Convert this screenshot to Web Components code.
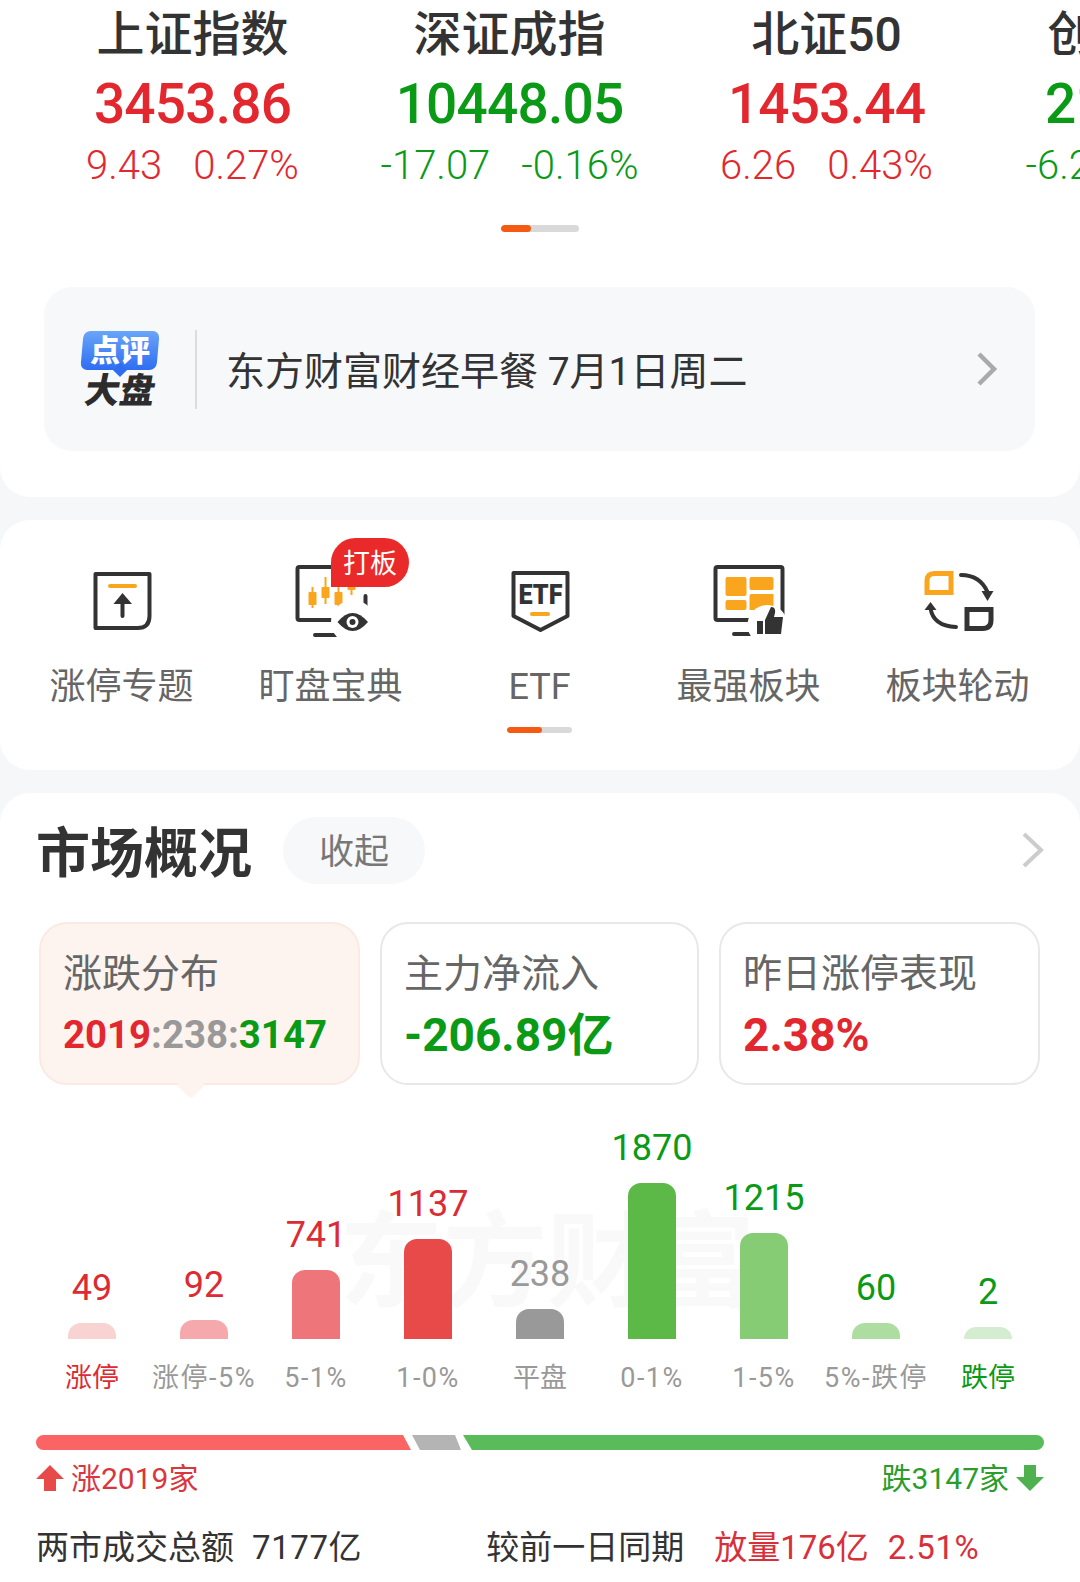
<!DOCTYPE html>
<html>
<head>
<meta charset="utf-8">
<style>
    html, body {
        margin: 0;
        padding: 0;
        background: #f6f7f9;
        height: 1582px;
        overflow: hidden;
        font-family: Roboto, "Noto Sans CJK SC", sans-serif;
    }
</style>
</head>
<body>
<market-app></market-app>
<script>
const RED = "#e3272e"
const GREEN = "#0a9a16"

class IndexCell extends HTMLElement {
    constructor () {
        super()
        this.root = this.attachShadow({mode: "open"})
    }

    connectedCallback () {
        const color = this.getAttribute("dir") === "down" ? GREEN : RED
        this.root.innerHTML = `
        <style>
            :host { display: block; flex: 0 0 317px; text-align: center; white-space: nowrap; }
            .name { font-size: 48px; line-height: 70px; height: 70px; font-weight: 500; color: #333; }
            .value { font-size: 55px; line-height: 68px; height: 68px; letter-spacing: -.8px; font-weight: 500; color: ${color}; }
            .sub { display: flex; justify-content: center; gap: 31px; font-size: 40px; line-height: 56px; font-weight: 300; color: ${color}; }
        </style>
        <div class="name">${this.getAttribute("name")}</div>
        <div class="value">${this.getAttribute("value")}</div>
        <div class="sub"><span>${this.getAttribute("delta")}</span><span>${this.getAttribute("pct")}</span></div>
        `
    }
}
customElements.define("index-cell", IndexCell)

class ScrollDot extends HTMLElement {
    constructor () {
        super()
        this.root = this.attachShadow({mode: "open"})
    }

    connectedCallback () {
        this.root.innerHTML = `
        <style>
            :host { display: block; width: var(--w, 78px); height: var(--h, 7px); border-radius: 4px; background: #d9d9d9; overflow: hidden; }
            div { height: 100%; width: var(--fill, 30px); background: #f45a12; border-radius: 4px; }
        </style>
        <div></div>
        `
    }
}
customElements.define("scroll-dot", ScrollDot)

class NewsBanner extends HTMLElement {
    constructor () {
        super()
        this.root = this.attachShadow({mode: "open"})
    }

    connectedCallback () {
        this.root.innerHTML = `
        <style>
            :host { display: flex; align-items: center; height: 164px; border-radius: 28px; background: #f7f8fa; }
            .logo { flex: 0 0 80px; margin-left: 36px; display: flex; flex-direction: column; align-items: center; }
            .bubble { position: relative; width: 76px; height: 39px; color: #fff; font-size: 30px; line-height: 39px; font-weight: 900; text-align: center; z-index: 0; }
            .bubble::before { content: ""; position: absolute; inset: 0; z-index: -1; border-radius: 7px; transform: skewX(-5deg); background: linear-gradient(180deg, #6aa5f8, #2e6df2); }
            .bubble::after { content: ""; position: absolute; left: 33px; bottom: -5px; width: 10px; height: 10px; z-index: -1; background: #2e6df2; transform: rotate(45deg); }
            .big { margin-top: 6px; font-size: 35px; line-height: 32px; font-weight: 900; color: #2c2c2c; transform: skewX(-10deg); }
            .divider { width: 2px; height: 79px; background: #dcdcdc; margin-left: 35px; }
            .text { margin: -3px 0 0 29px; flex: 1; font-size: 39px; color: #333; white-space: nowrap; }
            svg { margin-right: 37px; }
        </style>
        <div class="logo"><div class="bubble">点评</div><div class="big">大盘</div></div>
        <div class="divider"></div>
        <div class="text">东方财富财经早餐 7月1日周二</div>
        <svg width="22" height="36" viewBox="0 0 22 36"><path d="M3 3 L18 18 L3 33" fill="none" stroke="#aaa" stroke-width="4.5"/></svg>
        `
    }
}
customElements.define("news-banner", NewsBanner)

const ICONS = {
    limit: `<svg width="80" height="80" viewBox="0 0 80 80"><path d="M13.5 14H67.5V56Q67.5 68 55.5 68H13.5Z" fill="none" stroke="#333" stroke-width="4" stroke-linejoin="round"/><path d="M28 26H53" stroke="#f9a51d" stroke-width="4" stroke-linecap="round"/><path d="M40.5 56V40" stroke="#333" stroke-width="4" stroke-linecap="round"/><path d="M31.5 44L40.5 33L50 44Z" fill="#333"/></svg>`,
    watch: `<svg width="80" height="80" viewBox="0 0 80 80"><path d="M46 7H8.5Q6.5 7 6.5 9V58Q6.5 60 8.500 60H48M24 75H48M74.500 36V56" fill="none" stroke="#333" stroke-width="4" stroke-linecap="round"/><g stroke="#f9a51d" stroke-width="2"><path d="M21.500 27V48M34.500 17V44M47.500 27V49M60.500 25V35"/></g><g fill="#f9a51d"><rect x="17.500" y="32" width="8" height="13" rx="1"/><rect x="30.500" y="27" width="8" height="11" rx="1"/><rect x="43.500" y="32" width="8" height="13" rx="1"/><rect x="56.500" y="24" width="8" height="6" rx="1"/></g><circle cx="62" cy="62" r="22" fill="#fff"/><path d="M46.500 62Q61.500 44 77 62Q61.500 80 46.500 62Z" fill="#333"/><circle cx="61.500" cy="62" r="6" fill="#fff"/><circle cx="61.500" cy="62" r="3" fill="#333"/></svg>`,
    etf: `<svg width="80" height="80" viewBox="0 0 80 80"><path d="M13.500 13H67.500V56L40.500 70L13.500 56Z" fill="none" stroke="#333" stroke-width="4" stroke-linejoin="round"/><text x="18.500" y="44" textLength="44" lengthAdjust="spacingAndGlyphs" font-family="Roboto, sans-serif" font-size="27" font-weight="900" fill="#333">ETF</text><path d="M32 54H48" stroke="#f9a51d" stroke-width="4" stroke-linecap="round"/></svg>`,
    best: `<svg width="80" height="80" viewBox="0 0 80 80"><path d="M42 60H8.500Q6.500 60 6.500 58V9Q6.500 7 8.500 7H71.500Q73.500 7 73.500 9V56M25 74H45" fill="none" stroke="#333" stroke-width="4" stroke-linecap="round"/><g fill="#f9a51d"><rect x="16.500" y="17" width="21" height="19" rx="2"/><rect x="40.500" y="17" width="24" height="13" rx="2"/><rect x="16.500" y="40" width="21" height="10" rx="2"/><path d="M40.500 36Q40.500 34 42.500 34H64.500V50H40.500Z"/></g><circle cx="58.500" cy="65" r="20" fill="#fff"/><path d="M48 61H54V74H48ZM56 74V60L62 47Q67 47 66 53L65 57H74L72 74Z" fill="#333"/></svg>`,
    rotate: `<svg width="80" height="80" viewBox="0 0 80 80"><path d="M9 32.500V21Q9 13.500 16.500 13.500H33V32.500Z" fill="none" stroke="#f9a51d" stroke-width="5"/><path d="M43 15Q62 15 69.500 32" fill="none" stroke="#333" stroke-width="4" stroke-linecap="round"/><path d="M63.500 31H75.500L69.500 41Z" fill="#333"/><path d="M12.500 48Q15 66 38 67" fill="none" stroke="#333" stroke-width="4" stroke-linecap="round"/><path d="M6.500 50L12.500 42L18.500 50Z" fill="#333"/><path d="M49 49.500H73V60Q73 68.500 64.500 68.500H49Z" fill="none" stroke="#333" stroke-width="5"/></svg>`
}

class ToolItem extends HTMLElement {
    constructor () {
        super()
        this.root = this.attachShadow({mode: "open"})
    }

    connectedCallback () {
        const badge = this.getAttribute("badge")
        this.root.innerHTML = `
        <style>
            :host { display: flex; flex-direction: column; align-items: center; position: relative; flex: 0 0 209px; }
            .icon { height: 80px; margin-top: 40px; }
            .icon svg { display: block; }
            .label { margin-top: 24px; font-size: 36px; line-height: 46px; color: #666; white-space: nowrap; }
            .badge { position: absolute; left: 105px; top: 18px; width: 78px; height: 49px; box-sizing: border-box; border-radius: 25px 25px 25px 0;
                background: #ea2a2a; color: #fff; font-size: 27px; line-height: 52px; text-align: center; }
        </style>
        <div class="icon">${ICONS[this.getAttribute("icon")]}</div>
        <div class="label">${this.getAttribute("label")}</div>
        ${badge ? `<div class="badge">${badge}</div>` : ""}
        `
    }
}
customElements.define("tool-item", ToolItem)

class StatTab extends HTMLElement {
    constructor () {
        super()
        this.root = this.attachShadow({mode: "open"})
    }

    connectedCallback () {
        this.root.innerHTML = `
        <style>
            :host { display: block; position: relative; box-sizing: border-box; height: 163px; padding: 23px 0 0 22px; border: 2px solid #e8e8e8; border-radius: 28px; background: #fff; }
            :host([active]) { background: #fdf3ef; border-color: #fbe9e2; }
            :host([active])::after { content: ""; position: absolute; left: 140px; bottom: -12px; width: 20px; height: 20px; background: #fdf3ef; transform: rotate(45deg); border-radius: 0 0 4px 0; }
            .label { font-size: 39px; line-height: 54px; color: #666; white-space: nowrap; }
            .value { margin-top: 7px; font-size: 38.4px; line-height: 54px; font-weight: 700; white-space: nowrap; position: relative; z-index: 1; }
        </style>
        <div class="label">${this.getAttribute("label")}</div>
        <div class="value"><slot></slot></div>
        `
    }
}
customElements.define("stat-tab", StatTab)

class DistBar extends HTMLElement {
    constructor () {
        super()
        this.root = this.attachShadow({mode: "open"})
    }

    connectedCallback () {
        const tone = this.getAttribute("tone")
        const label = this.getAttribute("label")
        const numColor = tone === "up" ? "#dc2b33" : tone === "down" ? GREEN : "#999"
        const labelColor = this.getAttribute("label-color") || "#999"
        this.root.innerHTML = `
        <style>
            :host { display: flex; flex-direction: column; align-items: center; justify-content: flex-end; position: relative; height: 100%; white-space: nowrap; }
            .num { font-size: 36px; line-height: 42px; margin-bottom: 14px; color: ${numColor}; font-weight: 400; }
            .bar { width: 48px; height: ${this.getAttribute("h")}px; background: ${this.getAttribute("color")}; border-radius: 13px 13px 0 0; }
            .label { height: 60px; line-height: 78px; font-size: 27px; letter-spacing: ${label.includes("%") ? 1.5 : 0}px; color: ${labelColor}; }
        </style>
        <div class="num">${this.getAttribute("num")}</div>
        <div class="bar"></div>
        <div class="label">${label}</div>
        `
    }
}
customElements.define("dist-bar", DistBar)

class RatioBar extends HTMLElement {
    constructor () {
        super()
        this.root = this.attachShadow({mode: "open"})
    }

    connectedCallback () {
        this.root.innerHTML = `
        <style>
            :host { display: block; height: 15px; }
            svg { display: block; }
        </style>
        <svg width="1008" height="15" viewBox="0 0 1008 15">
            <path d="M7.5 0H367L375 15H7.5A7.5 7.5 0 0 1 7.5 0Z" fill="#fb6464"/>
            <path d="M376 0H419L425 15H384Z" fill="#b4b4b4"/>
            <path d="M427 0H1000.5A7.5 7.5 0 0 1 1000.5 15H436Z" fill="#5abb5a"/>
        </svg>
        `
    }
}
customElements.define("ratio-bar", RatioBar)

class MarketPanel extends HTMLElement {
    constructor () {
        super()
        this.root = this.attachShadow({mode: "open"})
    }

    connectedCallback () {
        const bars = [
            ["49", 16, "#f9d2d2", "涨停", "up", "#dc2b33"],
            ["92", 19, "#f5a9ad", "涨停-5%", "up"],
            ["741", 69, "#ee7579", "5-1%", "up"],
            ["1137", 100, "#e84a4a", "1-0%", "up"],
            ["238", 30, "#999999", "平盘", "flat"],
            ["1870", 156, "#5cb947", "0-1%", "down"],
            ["1215", 106, "#86cc75", "1-5%", "down"],
            ["60", 16, "#aedda2", "5%-跌停", "down"],
            ["2", 12, "#d4eccf", "跌停", "down", GREEN]
        ]
        const barHtml = bars.map(b => `<dist-bar num="${b[0]}" h="${b[1]}" color="${b[2]}" label="${b[3]}" tone="${b[4]}" ${b[5] ? `label-color="${b[5]}"` : ""}></dist-bar>`).join("")

        this.root.innerHTML = `
        <style>
            :host { display: block; background: #fff; border-radius: 30px 30px 0 0; height: 789px; padding: 0 36px; box-sizing: border-box; }
            .head { display: flex; align-items: flex-start; height: 124px; }
            h2 { margin: 0; font-size: 54px; line-height: 124px; font-weight: 700; color: #333; }
            .fold { margin: 24px 0 0 31px; width: 142px; height: 67px; border-radius: 34px; background: #f6f8fa; color: #777; font-size: 35px; line-height: 71px; text-align: center; }
            .head svg { margin: 38px -1px 0 auto; }
            .tabs { display: grid; grid-template-columns: 321px 319px 321px; column-gap: 20px; padding-left: 3px; margin-top: 5px; }
            .up { color: ${RED}; } .flat { color: #999; } .down { color: ${GREEN}; }
            .big { font-size: 46px; }
            .chart { position: relative; display: grid; grid-template-columns: repeat(9, 112px); height: 314px; }
            .mark { position: absolute; left: 303px; top: 124px; font-size: 104px; line-height: 110px; font-weight: 700; color: #f9f9f9; white-space: nowrap; }
            dist-bar { z-index: 1; }
            ratio-bar { margin-top: 36px; }
            .tally { display: flex; justify-content: space-between; align-items: center; height: 52px; font-size: 30px; }
            .tally span { display: flex; align-items: center; gap: 7px; }
            .tally svg { margin-top: 3px; }
            .tally .up { color: #d9363e; } .tally .down { color: #2a9d2a; }
            .total { display: flex; font-size: 33px; line-height: 46px; margin-top: 23px; color: #333; white-space: nowrap; }
            .total .up { color: #d8303a; }
            .total .num { letter-spacing: .6px; }
            .g1 { margin-left: 18px; } .g2 { margin-left: 124px; } .g3 { margin-left: 30px; } .g4 { margin-left: 19px; }
        </style>
        <div class="head">
            <h2>市场概况</h2>
            <div class="fold">收起</div>
            <svg width="24" height="38" viewBox="0 0 24 38"><path d="M3 3 L20 19 L3 35" fill="none" stroke="#ccc" stroke-width="4"/></svg>
        </div>
        <div class="tabs">
            <stat-tab label="涨跌分布" active><span class="up">2019</span><span class="flat">:238:</span><span class="down">3147</span></stat-tab>
            <stat-tab label="主力净流入"><span class="down big">-206.89亿</span></stat-tab>
            <stat-tab label="昨日涨停表现"><span class="up big">2.38%</span></stat-tab>
        </div>
        <div class="chart">
            <div class="mark">东方财富</div>
            ${barHtml}
        </div>
        <ratio-bar></ratio-bar>
        <div class="tally">
            <span class="up"><svg width="28" height="26" viewBox="0 0 28 26"><path d="M14 0L28 14H20V26H8V14H0Z" fill="#e84a4a"/></svg>涨2019家</span>
            <span class="down">跌3147家<svg width="28" height="26" viewBox="0 0 28 26"><path d="M14 26L28 12H20V0H8V12H0Z" fill="#4fb04f"/></svg></span>
        </div>
        <div class="total">
            <span>两市成交总额</span><span class="g1 num">7177亿</span>
            <span class="g2">较前一日同期</span>
            <span class="g3 up">放量176亿</span><span class="g4 up num">2.51%</span>
        </div>
        `
    }
}
customElements.define("market-panel", MarketPanel)

class MarketApp extends HTMLElement {
    constructor () {
        super()
        this.root = this.attachShadow({mode: "open"})
    }

    connectedCallback () {
        this.root.innerHTML = `
        <style>
            :host { display: block; width: 1080px; }
            .top { background: #fff; border-radius: 0 0 30px 30px; height: 497px; box-sizing: border-box; overflow: hidden; }
            .strip { display: flex; padding-left: 34px; height: 194px; overflow: hidden; }
            .top scroll-dot { margin: 31px 0 0 501px; }
            news-banner { margin: 55px 45px 0 44px; }
            .tools { margin-top: 23px; height: 250px; background: #fff; border-radius: 30px; overflow: hidden; }
            .row { display: flex; padding-left: 17px; }
            .tools scroll-dot { --w: 65px; --h: 6px; --fill: 35px; margin: 17px 0 0 507px; }
            market-panel { margin-top: 23px; }
        </style>
        <section class="top">
            <div class="strip">
                <index-cell name="上证指数" value="3453.86" delta="9.43" pct="0.27%"></index-cell>
                <index-cell name="深证成指" value="10448.05" delta="-17.07" pct="-0.16%" dir="down"></index-cell>
                <index-cell name="北证50" value="1453.44" delta="6.26" pct="0.43%"></index-cell>
                <index-cell name="创业板指" value="2147.01" delta="-6.26" pct="-0.29%" dir="down"></index-cell>
            </div>
            <scroll-dot></scroll-dot>
            <news-banner></news-banner>
        </section>
        <section class="tools">
            <div class="row">
                <tool-item icon="limit" label="涨停专题"></tool-item>
                <tool-item icon="watch" label="盯盘宝典" badge="打板"></tool-item>
                <tool-item icon="etf" label="ETF"></tool-item>
                <tool-item icon="best" label="最强板块"></tool-item>
                <tool-item icon="rotate" label="板块轮动"></tool-item>
            </div>
            <scroll-dot></scroll-dot>
        </section>
        <market-panel></market-panel>
        `
    }
}
customElements.define("market-app", MarketApp)
</script>
</body>
</html>
